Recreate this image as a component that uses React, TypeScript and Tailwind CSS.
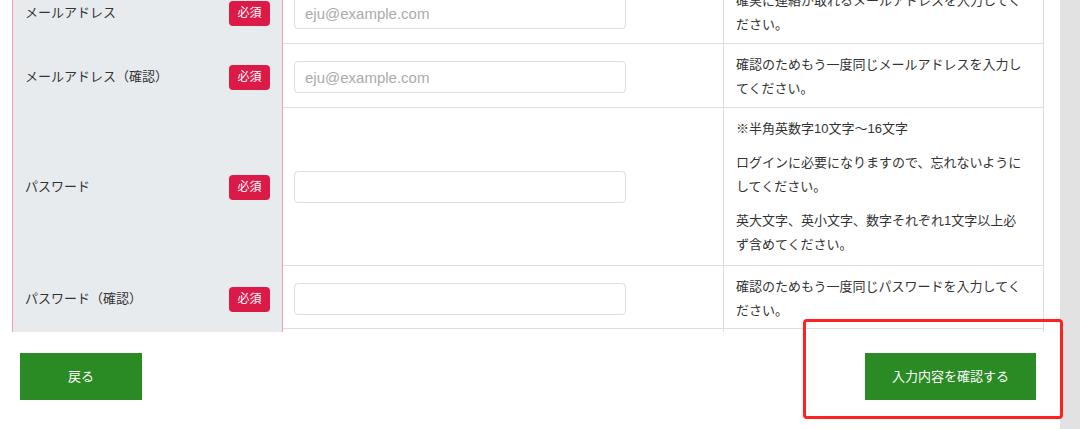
const fontStack = { fontFamily: '"Liberation Sans", "Noto Sans CJK JP", sans-serif' };

const Badge = () => (
  <span className="inline-flex items-center justify-center w-[41px] h-[25px] rounded-[4px] bg-[#dc1a48] text-white text-[12px] leading-none">
    必須
  </span>
);

const Row = ({
  label,
  placeholder,
  notes,
  height,
}: {
  label: string;
  placeholder?: string;
  notes: string[];
  height: string;
}) => (
  <div className={`grid grid-cols-[271px_441px_320px] border-b border-[#dddddd] ${height}`}>
    <div className="flex items-center justify-between bg-[#e7ebee] border-l border-r border-l-[#f19bb0] border-r-[#e8a2b3] pl-[12px] pr-[12px]">
      <span className="text-[13px] text-[#333333]">{label}</span>
      <Badge />
    </div>
    <div className="flex items-center pl-[11px] border-r border-[#dddddd]">
      <input
        type="text"
        placeholder={placeholder}
        className="w-[332px] h-[32px] rounded-[4px] border border-[#dddddd] bg-white px-[10px] text-[15px] placeholder:text-[#aaaaaa] outline-none"
      />
    </div>
    <div className="flex flex-col justify-center gap-[10px] pl-[12px] pr-[16px] py-[9px] border-r border-[#dddddd]">
      {notes.map((n) => (
        <p key={n} className="text-[13px] leading-[24px] text-[#333333]">
          {n}
        </p>
      ))}
    </div>
  </div>
);

export default function App() {
  const rows = [
    {
      label: 'メールアドレス',
      placeholder: 'eju@example.com',
      notes: ['確実に連絡が取れるメールアドレスを入力してください。'],
      height: 'h-[64px]',
    },
    {
      label: 'メールアドレス（確認）',
      placeholder: 'eju@example.com',
      notes: ['確認のためもう一度同じメールアドレスを入力してください。'],
      height: 'h-[64px]',
    },
    {
      label: 'パスワード',
      notes: [
        '※半角英数字10文字～16文字',
        'ログインに必要になりますので、忘れないようにしてください。',
        '英大文字、英小文字、数字それぞれ1文字以上必ず含めてください。',
      ],
      height: 'h-[158px]',
    },
    {
      label: 'パスワード（確認）',
      notes: ['確認のためもう一度同じパスワードを入力してください。'],
      height: 'h-[63px]',
    },
  ];

  return (
    <div className="relative flex w-[1080px] h-[429px] overflow-hidden bg-white" style={fontStack}>
      <div className="w-[1060px] h-full">
        <div className="ml-[12px] w-[1032px] -mt-[20px]">
          {rows.map((r) => (
            <Row key={r.label} {...r} />
          ))}
        </div>
        <div className="flex justify-between mt-[24px] pl-[20px] pr-[24px]">
          <button className="w-[122px] h-[47px] bg-[#2a8a24] text-white text-[13px]">戻る</button>
          <button className="w-[171px] h-[47px] bg-[#2a8a24] text-white text-[13px]">入力内容を確認する</button>
        </div>
      </div>
      <div className="w-[20px] h-full bg-[#e2e2e2]" />
      <div className="absolute left-[803px] top-[319px] w-[260px] h-[100px] border-[3px] border-[#ff2121] rounded-[4px]" />
    </div>
  );
}
